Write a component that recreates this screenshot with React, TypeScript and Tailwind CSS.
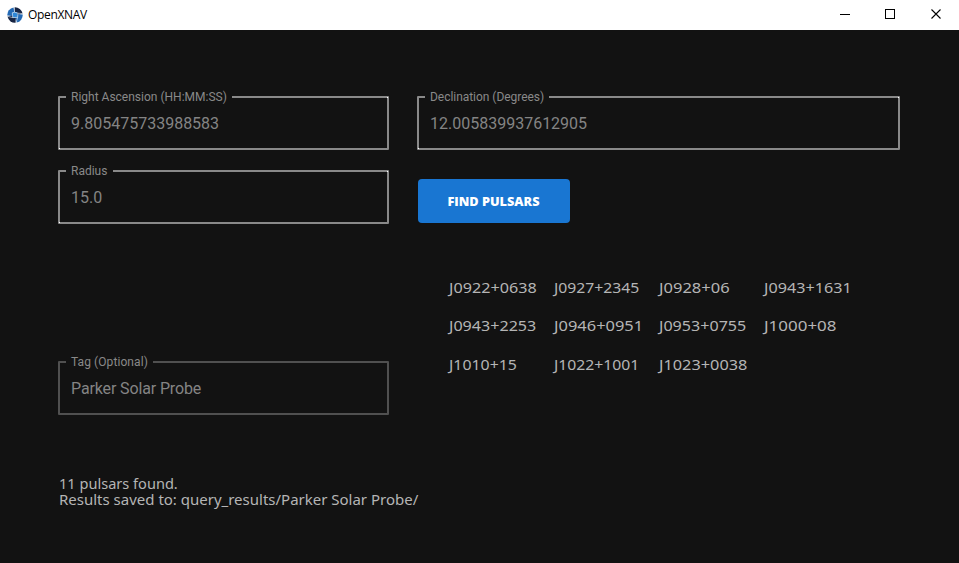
type FieldProps = { label: string; value: string; dim?: boolean; className: string; labelWidth: string };

function Field({ label, value, dim, className, labelWidth }: FieldProps) {
  return (
    <div
      className={`relative flex h-[54px] items-center rounded-[1px] border-2 pt-0.5 pl-[11px] ${dim ? "border-[#505050]" : "border-[#898989]"} ${className}`}
    >
      <span className={`absolute -top-[9px] left-1.5 bg-[#121212] pl-[5px] text-xs leading-4 whitespace-nowrap text-[#898989] ${labelWidth}`}>
        {label}
      </span>
      <span className={`text-base leading-5 text-[#848484] ${dim ? "tracking-[-0.13px]" : ""}`}>{value}</span>
      {!dim && <i className="absolute -bottom-px -left-px size-px bg-white" />}
      {!dim && <i className="absolute -top-px -right-px size-px bg-white" />}
    </div>
  );
}

const pulsars: [string, string][] = [
  ["J0922+0638", "scale-x-[1.155]"],
  ["J0927+2345", "scale-x-[1.125]"],
  ["J0928+06", "scale-x-[1.18]"],
  ["J0943+1631", "scale-x-[1.155]"],
  ["J0943+2253", "scale-x-[1.15]"],
  ["J0946+0951", "scale-x-[1.175]"],
  ["J0953+0755", "scale-x-[1.15]"],
  ["J1000+08", "scale-x-[1.21]"],
  ["J1010+15", "scale-x-[1.135]"],
  ["J1022+1001", "scale-x-[1.125]"],
  ["J1023+0038", "scale-x-[1.165]"],
];

function Logo() {
  return (
    <svg className="ml-[7px] size-4" viewBox="0 0 16 16">
      <path d="M7.6 .3A7.7 7.7 0 0 1 15.6 6.6L10 8.2 7.4 5Z" fill="#172443" />
      <path d="M15.7 7.4A7.7 7.7 0 0 1 9.6 15.6L7.8 10 11 7.3Z" fill="#2369b5" />
      <path d="M8.6 15.7A7.7 7.7 0 0 1 .5 9.6L6 7.8 8.7 11Z" fill="#172443" />
      <path d="M.3 8.6A7.7 7.7 0 0 1 6.6 .4L8.2 6 5 8.7Z" fill="#2369b5" />
      <path d="M5 5.6 10.2 5l.7 5.2-5.2.7Z" fill="#2f86d6" />
      <path d="M7 .5 7.6 5.2 11 6.2 15.5 6.6M11 6.2 10.6 10.4 9.2 15.5M10.6 10.4 5.8 10.6.5 9.3M5.8 10.6 5.3 5.8 7.6 5.2" fill="none" stroke="#f4f8fc" strokeWidth=".6" />
    </svg>
  );
}

export default function App() {
  return (
    <div className="flex h-[563px] w-[959px] flex-col overflow-hidden bg-[#121212] font-['Roboto',sans-serif]">
      <header className="flex h-[30px] shrink-0 items-center bg-white text-black">
        <Logo />
        <span className="ml-[5px] flex-1 font-['Open_Sans',sans-serif] text-xs leading-4 tracking-[-0.32px]">OpenXNAV</span>
        <svg className="h-[30px] w-[139px]" viewBox="0 0 139 30" fill="none" stroke="#000" shapeRendering="crispEdges">
          <path d="M20 14.5h10M65.5 9.5h9v9h-9z" />
          <path d="m111.5 9.5 9 9m0-9-9 9" shapeRendering="auto" strokeWidth="1.1" />
        </svg>
      </header>
      <main className="flex flex-1 gap-7 pt-[66px] pl-[58px]">
        <section className="flex w-[331px] flex-col">
          <Field label="Right Ascension (HH:MM:SS)" value="9.805475733988583" className="w-[331px]" labelWidth="w-[166px]" />
          <Field label="Radius" value="15.0" className="mt-5 w-[331px]" labelWidth="w-[47px]" />
          <Field label="Tag (Optional)" value="Parker Solar Probe" dim className="mt-[137px] w-[331px]" labelWidth="w-[87px] tracking-[0.08px]" />
          <div className="mt-[61px] ml-px font-['Noto_Sans',sans-serif] text-[14px] leading-4 whitespace-nowrap text-[#b5b5b5]">
            <p className="origin-left scale-x-[1.04]">11 pulsars found.</p>
            <p className="origin-left scale-x-[1.071]">Results saved to: query_results/Parker Solar Probe/</p>
          </div>
        </section>
        <section className="flex w-[483px] flex-col">
          <Field label="Declination (Degrees)" value="12.005839937612905" className="w-[483px]" labelWidth="w-[124px] tracking-[-0.04px]" />
          <button className="mt-[29px] ml-px h-11 w-[152px] rounded-[4px] bg-[#1976d2] pt-0.5 pr-px font-['Open_Sans',sans-serif] text-xs font-extrabold text-white">
            <span className="inline-block scale-x-[1.06]">FIND PULSARS</span>
          </button>
          <div className="mt-[46px] ml-[31.5px] grid w-[420px] grid-cols-4">
            {pulsars.map(([name, stretch]) => (
              <span
                key={name}
                className={`h-[38.4px] origin-left font-['Noto_Sans',sans-serif] text-[14px] leading-[38px] text-[#b5b5b5] ${stretch}`}
              >
                {name}
              </span>
            ))}
          </div>
        </section>
      </main>
    </div>
  );
}
